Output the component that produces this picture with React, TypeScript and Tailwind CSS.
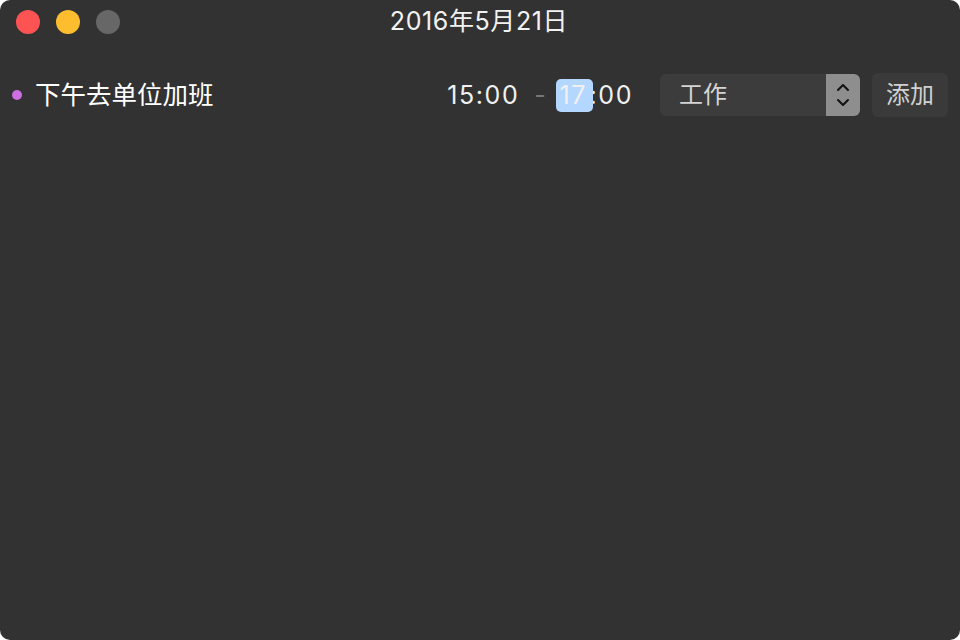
import React from "react";

const font = { fontFamily: 'Inter, "Noto Sans CJK SC", sans-serif' };

// --- Traffic light buttons ---
function TrafficLights() {
    return (
        <div className="flex items-center gap-4 pl-4">
            <div className="w-6 h-6 rounded-full bg-[#fe5353]" />
            <div className="w-6 h-6 rounded-full bg-[#fdbd2e]" />
            <div className="w-6 h-6 rounded-full bg-[#676767]" />
        </div>
    );
}

// --- Stepper chevrons ---
function Chevrons() {
    return (
        <svg width="14" height="26" viewBox="0 0 14 26" fill="none" stroke="#111" strokeWidth="2" strokeLinecap="round" strokeLinejoin="round">
            <path d="M2 8 L7 3 L12 8" />
            <path d="M2 18 L7 23 L12 18" />
        </svg>
    );
}

export default function App() {
    return (
        <div className="w-[960px] h-[640px] bg-white" style={font}>
            <div className="w-full h-full rounded-[10px] bg-[#323232] flex flex-col overflow-hidden">
                {/* Title bar */}
                <div className="h-[44px] grid grid-cols-[1fr_auto_1fr] items-center">
                    <TrafficLights />
                    <div className="text-[25px] text-[#f2f2f2] tracking-[0.6px] pr-[2px]">2016年5月21日</div>
                    <div />
                </div>

                {/* Event row */}
                <div className="mt-[29px] flex items-center pl-3 pr-3">
                    <div className="w-[10px] h-[10px] rounded-full bg-[#cc6fe0]" />
                    <span className="ml-[13px] text-[25.5px] text-white leading-none">下午去单位加班</span>

                    <div className="ml-auto flex items-center text-[25px] tracking-[1.6px] text-[#f0f0f0] leading-none">
                        <span>15:00</span>
                        <span className="ml-[15px] text-[#777]">-</span>
                        <span className="ml-[9px] flex items-center">
                            <span className="relative z-10 h-[33px] w-[37px] pl-[3px] flex items-center rounded-[5px] bg-[#b3d7ff]">17</span>
                            <span className="-ml-[4px]">:00</span>
                        </span>
                    </div>

                    <div className="ml-[27px] w-[200px] h-[42px] rounded-[6px] bg-[#3c3c3c] flex items-stretch">
                        <span className="flex-1 flex items-center pl-[19px] text-[24px] text-[#d4d4d4]">工作</span>
                        <div className="w-[34px] bg-[#8e8e8e] rounded-r-[6px] flex items-center justify-center">
                            <Chevrons />
                        </div>
                    </div>

                    <div className="ml-[12px] w-[76px] h-[44px] rounded-[6px] bg-[#3a3a3a] flex items-center justify-center text-[24px] text-[#d0d0d0]">
                        添加
                    </div>
                </div>
            </div>
        </div>
    );
}
